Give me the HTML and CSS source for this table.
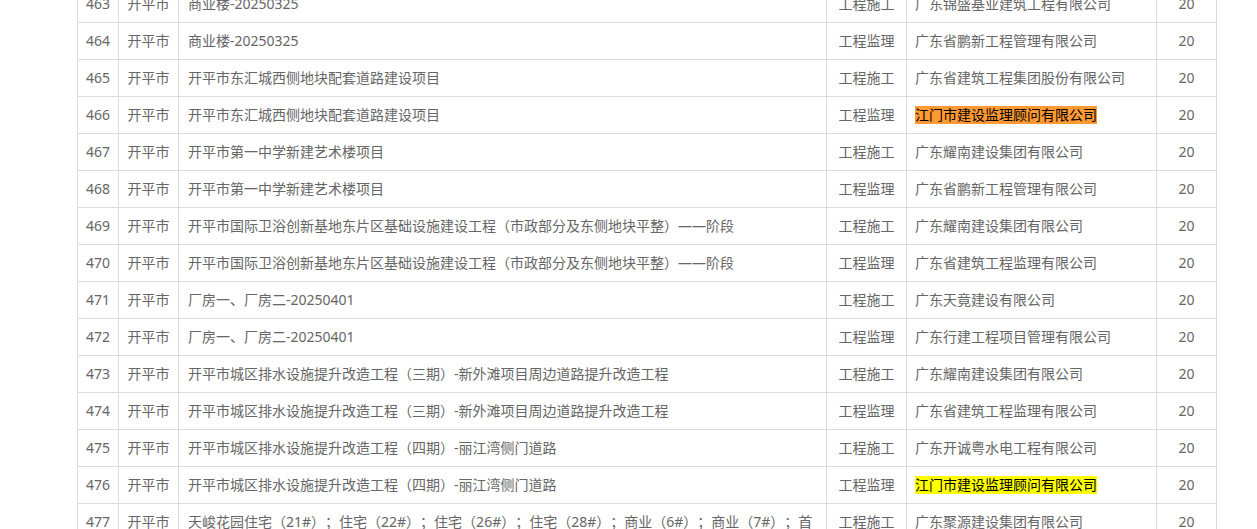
FILE: index.html
```html
<!DOCTYPE html>
<html lang="zh-CN">
<head>
<meta charset="utf-8">
<title>项目列表</title>
<link rel="stylesheet" href="styles.css">
</head>
<body>
<div class="viewport">
  <table class="list">
    <colgroup>
      <col class="c-no"><col class="c-city"><col class="c-proj"><col class="c-type"><col class="c-corp"><col class="c-score">
    </colgroup>
    <tbody>
      <tr><td class="ctr">463</td><td class="ctr">开平市</td><td class="proj">商业楼-20250325</td><td class="ctr">工程施工</td><td class="corp">广东锦盛基业建筑工程有限公司</td><td class="ctr">20</td></tr>
      <tr><td class="ctr">464</td><td class="ctr">开平市</td><td class="proj">商业楼-20250325</td><td class="ctr">工程监理</td><td class="corp">广东省鹏新工程管理有限公司</td><td class="ctr">20</td></tr>
      <tr><td class="ctr">465</td><td class="ctr">开平市</td><td class="proj">开平市东汇城西侧地块配套道路建设项目</td><td class="ctr">工程施工</td><td class="corp">广东省建筑工程集团股份有限公司</td><td class="ctr">20</td></tr>
      <tr><td class="ctr">466</td><td class="ctr">开平市</td><td class="proj">开平市东汇城西侧地块配套道路建设项目</td><td class="ctr">工程监理</td><td class="corp"><span class="mark orange">江门市建设监理顾问有限公司</span></td><td class="ctr">20</td></tr>
      <tr><td class="ctr">467</td><td class="ctr">开平市</td><td class="proj">开平市第一中学新建艺术楼项目</td><td class="ctr">工程施工</td><td class="corp">广东耀南建设集团有限公司</td><td class="ctr">20</td></tr>
      <tr><td class="ctr">468</td><td class="ctr">开平市</td><td class="proj">开平市第一中学新建艺术楼项目</td><td class="ctr">工程监理</td><td class="corp">广东省鹏新工程管理有限公司</td><td class="ctr">20</td></tr>
      <tr><td class="ctr">469</td><td class="ctr">开平市</td><td class="proj">开平市国际卫浴创新基地东片区基础设施建设工程（市政部分及东侧地块平整）——阶段</td><td class="ctr">工程施工</td><td class="corp">广东耀南建设集团有限公司</td><td class="ctr">20</td></tr>
      <tr><td class="ctr">470</td><td class="ctr">开平市</td><td class="proj">开平市国际卫浴创新基地东片区基础设施建设工程（市政部分及东侧地块平整）——阶段</td><td class="ctr">工程监理</td><td class="corp">广东省建筑工程监理有限公司</td><td class="ctr">20</td></tr>
      <tr><td class="ctr">471</td><td class="ctr">开平市</td><td class="proj">厂房一、厂房二-20250401</td><td class="ctr">工程施工</td><td class="corp">广东天竟建设有限公司</td><td class="ctr">20</td></tr>
      <tr><td class="ctr">472</td><td class="ctr">开平市</td><td class="proj">厂房一、厂房二-20250401</td><td class="ctr">工程监理</td><td class="corp">广东行建工程项目管理有限公司</td><td class="ctr">20</td></tr>
      <tr><td class="ctr">473</td><td class="ctr">开平市</td><td class="proj">开平市城区排水设施提升改造工程（三期）-新外滩项目周边道路提升改造工程</td><td class="ctr">工程施工</td><td class="corp">广东耀南建设集团有限公司</td><td class="ctr">20</td></tr>
      <tr><td class="ctr">474</td><td class="ctr">开平市</td><td class="proj">开平市城区排水设施提升改造工程（三期）-新外滩项目周边道路提升改造工程</td><td class="ctr">工程监理</td><td class="corp">广东省建筑工程监理有限公司</td><td class="ctr">20</td></tr>
      <tr><td class="ctr">475</td><td class="ctr">开平市</td><td class="proj">开平市城区排水设施提升改造工程（四期）-丽江湾侧门道路</td><td class="ctr">工程施工</td><td class="corp">广东开诚粤水电工程有限公司</td><td class="ctr">20</td></tr>
      <tr><td class="ctr">476</td><td class="ctr">开平市</td><td class="proj">开平市城区排水设施提升改造工程（四期）-丽江湾侧门道路</td><td class="ctr">工程监理</td><td class="corp"><span class="mark yellow">江门市建设监理顾问有限公司</span></td><td class="ctr">20</td></tr>
      <tr><td class="ctr">477</td><td class="ctr">开平市</td><td class="proj">天峻花园住宅（21#）；住宅（22#）；住宅（26#）；住宅（28#）；商业（6#）；商业（7#）；首层架空层及配套设施</td><td class="ctr">工程施工</td><td class="corp">广东聚源建设集团有限公司</td><td class="ctr">20</td></tr>
    </tbody>
  </table>
</div>
</body>
</html>
```

FILE: styles.css
```css
html, body {
  margin: 0;
  padding: 0;
  background: #fff;
}

.viewport {
  height: 100vh;
  overflow: hidden;
  padding-left: 77px;
}

.list {
  margin-top: -15px;
  width: 1139px;
  table-layout: fixed;
  border-collapse: collapse;
  font-family: "Noto Sans", "Noto Sans CJK SC", sans-serif;
  font-size: 14px;
  color: #666;
  text-spacing-trim: space-all;
}

.c-no { width: 41px; }
.c-city { width: 60px; }
.c-proj { width: 648px; }
.c-type { width: 80px; }
.c-corp { width: 250px; }
.c-score { width: 60px; }

.list td {
  border: 1px solid #dddddd;
  padding: 8px 10px;
  line-height: 20px;
  vertical-align: top;
  white-space: nowrap;
}

.list td.ctr {
  text-align: center;
  padding-left: 0;
  padding-right: 0;
}

.list td.proj {
  padding-left: 9px;
  padding-right: 4px;
  white-space: normal;
}

.list td.corp {
  padding-left: 8px;
}

.mark {
  display: inline-block;
  line-height: 18px;
  vertical-align: top;
  margin-top: 1px;
  color: #000;
}

.mark.orange { background: #ff9933; }
.mark.yellow { background: #ffff00; }
```
